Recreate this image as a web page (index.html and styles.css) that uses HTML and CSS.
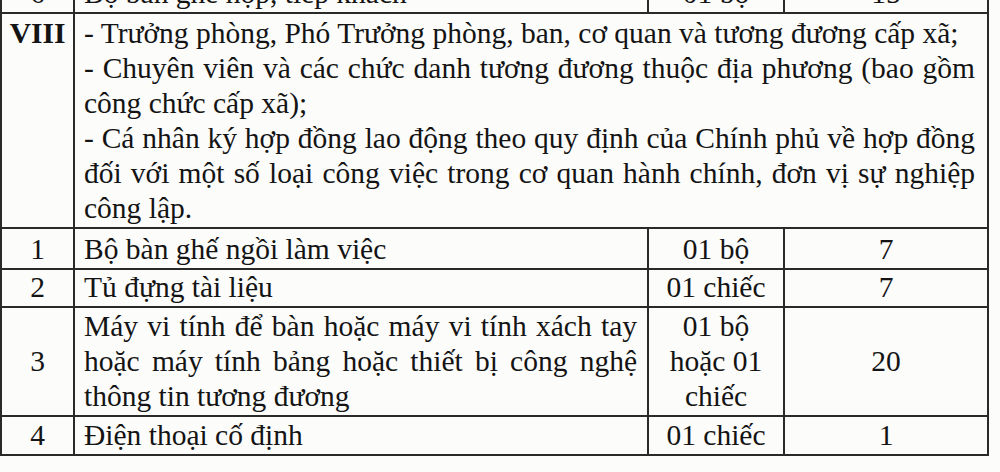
FILE: index.html
```html
<!DOCTYPE html>
<html lang="vi">
<head>
<meta charset="utf-8">
<title>Bảng tiêu chuẩn</title>
<link rel="stylesheet" href="styles.css">
</head>
<body>
<div class="page">
<table class="doc">
  <colgroup>
    <col class="c-no">
    <col class="c-name">
    <col class="c-unit">
    <col class="c-qty">
  </colgroup>
  <tr class="cut">
    <td class="num">6</td>
    <td class="txt">Bộ bàn ghế họp, tiếp khách</td>
    <td class="num">01 bộ</td>
    <td class="num">15</td>
  </tr>
  <tr class="group">
    <td class="roman">VIII</td>
    <td class="txt" colspan="3">
      <div>- Trưởng phòng, Phó Trưởng phòng, ban, cơ quan và tương đương cấp xã;</div>
      <div>- Chuyên viên và các chức danh tương đương thuộc địa phương (bao gồm công chức cấp xã);</div>
      <div>- Cá nhân ký hợp đồng lao động theo quy định của Chính phủ về hợp đồng đối với một số loại công việc trong cơ quan hành chính, đơn vị sự nghiệp công lập.</div>
    </td>
  </tr>
  <tr class="r1">
    <td class="num">1</td>
    <td class="txt">Bộ bàn ghế ngồi làm việc</td>
    <td class="num">01 bộ</td>
    <td class="num">7</td>
  </tr>
  <tr class="r2">
    <td class="num">2</td>
    <td class="txt">Tủ đựng tài liệu</td>
    <td class="num">01 chiếc</td>
    <td class="num">7</td>
  </tr>
  <tr class="r3">
    <td class="num">3</td>
    <td class="txt">Máy vi tính để bàn hoặc máy vi tính xách tay hoặc máy tính bảng hoặc thiết bị công nghệ thông tin tương đương</td>
    <td class="num">01 bộ<br>hoặc 01<br>chiếc</td>
    <td class="num">20</td>
  </tr>
  <tr class="r4">
    <td class="num">4</td>
    <td class="txt">Điện thoại cố định</td>
    <td class="num">01 chiếc</td>
    <td class="num">1</td>
  </tr>
</table>
</div>
</body>
</html>
```

FILE: styles.css
```css
html, body {
  margin: 0;
  padding: 0;
  background: #fcfcfb;
}

.page {
  width: 1000px;
  height: 472px;
  overflow: hidden;
}

.doc {
  margin-top: -27px;
  margin-left: 0;
  border-collapse: collapse;
  table-layout: fixed;
  width: 987px;
  font-family: "Liberation Serif", "Times New Roman", serif;
  font-size: 29.5px;
  line-height: 35px;
  color: #141414;
}

.c-no { width: 73px; }
.c-name { width: 574px; }
.c-unit { width: 136px; }
.c-qty { width: 204px; }

.doc td {
  border: 2px solid #2a2a2a;
  padding: 1px 10px 1px 9px;
  vertical-align: middle;
}

.doc td.txt {
  text-align: justify;
}

.doc td.num {
  text-align: center;
  padding-left: 4px;
  padding-right: 4px;
}

.doc td.roman {
  font-weight: bold;
  text-align: center;
  vertical-align: top;
  padding-left: 4px;
  padding-right: 4px;
}

.group td {
  padding-top: 2px;
  padding-bottom: 1px;
}

.group td.txt {
  padding-right: 12px;
}

.r1 td {
  padding-top: 3px;
  padding-bottom: 1px;
}

.r2 td {
  padding-top: 0;
  padding-bottom: 1px;
}
```
